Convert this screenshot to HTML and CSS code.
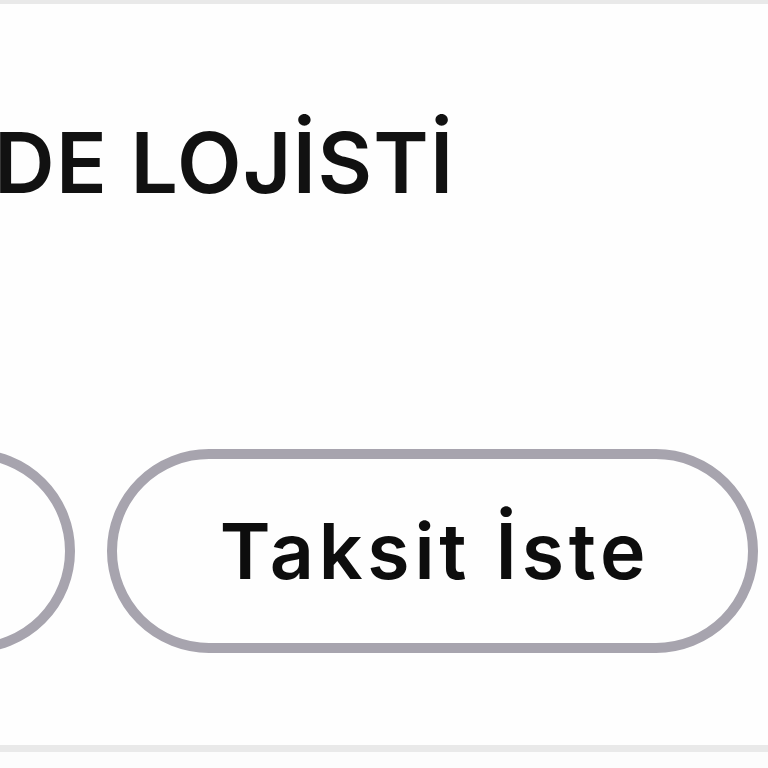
FILE: index.html
```html
<!DOCTYPE html>
<html lang="tr">
<head>
    <meta charset="UTF-8">
    <meta name="viewport" content="width=device-width, initial-scale=1.0">
    <title>Lojistik</title>
    <link rel="stylesheet" href="styles.css">
</head>
<body>
    <div class="strip top"></div>
    <section class="card">
        <h1 class="title">DE LOJİSTİ</h1>
        <div class="actions">
            <button class="pill pill-back" type="button"></button>
            <button class="pill" type="button">Taksit İste</button>
        </div>
    </section>
    <div class="strip bottom"></div>
    <div class="below"></div>
</body>
</html>
```

FILE: styles.css
```css
html, body {
    margin: 0;
    padding: 0;
    background-color: #fefefe;
    font-family: Inter, "Liberation Sans", sans-serif;
    overflow: hidden;
}
.strip {
    background-color: #e9e9e9;
}
.strip.top {
    height: 4px;
}
.strip.bottom {
    height: 7px;
}
.below {
    height: 16px;
    background-color: #fcfcfc;
}
.card {
    height: 741px;
    box-sizing: border-box;
    padding: 117px 0 0 0;
    background-color: #fefefe;
}
.title {
    margin: 0 0 0 -6px;
    font-size: 84px;
    line-height: 1;
    font-weight: 600;
    letter-spacing: 1.3px;
    color: #111;
    white-space: nowrap;
}
.actions {
    display: flex;
    gap: 32px;
    margin: 244px 0 0 -225px;
}
.pill {
    flex: none;
    width: 651px;
    height: 204px;
    box-sizing: border-box;
    border: 10px solid #a7a4ae;
    border-radius: 102px;
    background-color: #fefefe;
    font-family: Inter, "Liberation Sans", sans-serif;
    font-size: 77px;
    font-weight: 600;
    letter-spacing: 4.8px;
    color: #0d0d0d;
    padding: 0 0 0 5px;
}
.pill-back {
    width: 300px;
}
```
